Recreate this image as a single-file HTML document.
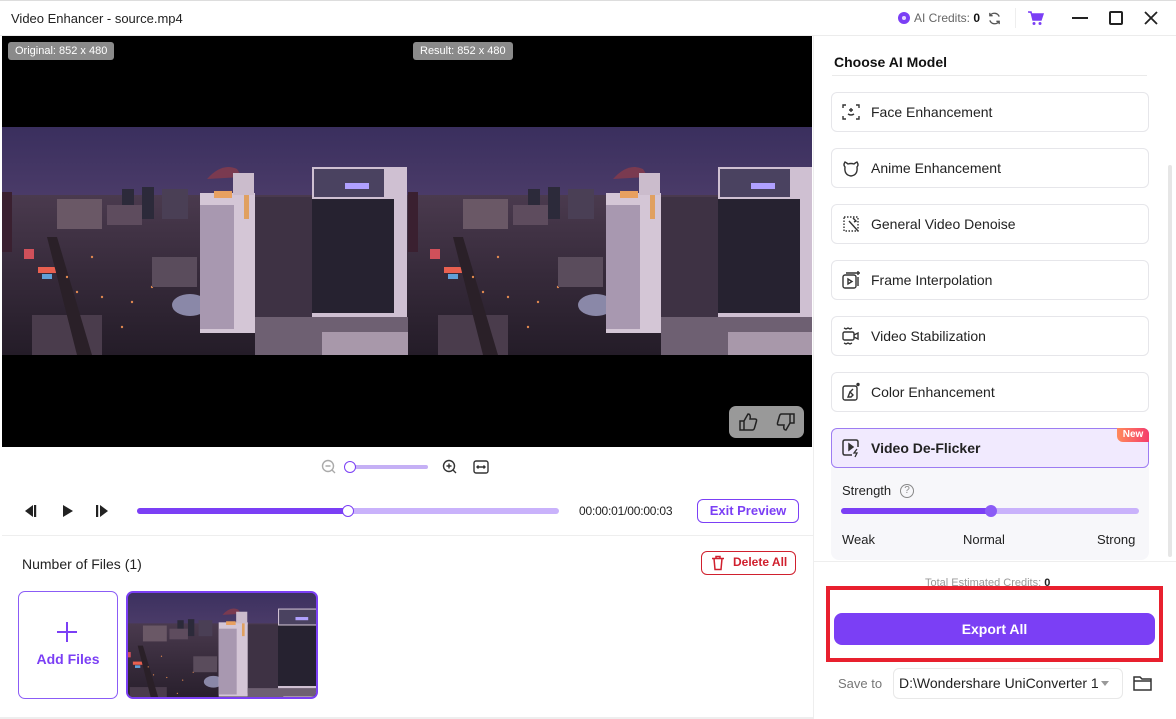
<!DOCTYPE html>
<html><head><meta charset="utf-8"><style>
*{box-sizing:border-box;margin:0;padding:0}
body{width:1176px;height:719px;overflow:hidden;background:#fff;font-family:"Liberation Sans",sans-serif;color:#222;position:relative}
.a{position:absolute}
.card{position:absolute;left:831px;width:318px;height:40px;border:1px solid #e6e6ea;border-radius:6px;background:#fff;font-size:14px;color:#222;display:flex;align-items:center;padding-left:9px}
.card svg{width:20px;height:20px;margin-right:10px}
</style></head><body>
<div class="a" style="left:0;top:0;width:1176px;height:36px;border-bottom:1px solid #ececec;border-top:1px solid #ddd"></div>
<div class="a" style="left:11px;top:11px;font-size:13px;color:#222">Video Enhancer - source.mp4</div>
<div class="a" style="left:898px;top:12px;width:12px;height:12px;border-radius:50%;background:#7b3ff5"></div>
<div class="a" style="left:902px;top:16px;width:4px;height:4px;border-radius:50%;background:#e6d8ff"></div>
<div class="a" style="left:914px;top:11px;font-size:12px;color:#666">AI Credits: <b style="color:#111">0</b></div>
<svg class="a" style="left:987px;top:11px" width="15" height="15" viewBox="0 0 16 16" fill="none" stroke="#555" stroke-width="1.4"><path d="M13 6A5.5 5.5 0 0 0 3.5 4.5M3 10a5.5 5.5 0 0 0 9.5 1.5"/><path d="M3 2v3h3M13 14v-3h-3"/></svg>
<div class="a" style="left:1015px;top:8px;width:1px;height:20px;background:#eee"></div>
<svg class="a" style="left:1027px;top:10px" width="17" height="16" viewBox="0 0 17 16"><path d="M1 2h3l2 8h8l2-6H5" fill="#7b3ff5" stroke="#7b3ff5" stroke-width="1.5"/><circle cx="7" cy="13.5" r="1.5" fill="#7b3ff5"/><circle cx="13" cy="13.5" r="1.5" fill="#7b3ff5"/></svg>
<div class="a" style="left:1072px;top:17px;width:16px;height:2px;background:#222"></div>
<div class="a" style="left:1109px;top:11px;width:14px;height:14px;border:2px solid #222;border-radius:2px"></div>
<svg class="a" style="left:1144px;top:11px" width="14" height="14"><path d="M1 1l12 12M13 1L1 13" stroke="#222" stroke-width="1.8"/></svg>

<div class="a" style="left:2px;top:36px;width:810px;height:411px;background:#000"></div>
<svg class="a" style="left:2px;top:127px" width="810" height="228" viewBox="0 0 810 228">
<defs>
<linearGradient id="sky" x1="0" y1="0" x2="0" y2="1"><stop offset="0" stop-color="#3a2f5e"/><stop offset=".5" stop-color="#55436f"/><stop offset="1" stop-color="#6e587e"/></linearGradient>
<linearGradient id="gr" x1="0" y1="0" x2="0" y2="1"><stop offset="0" stop-color="#4a3a4e"/><stop offset=".5" stop-color="#362a3a"/><stop offset="1" stop-color="#241c28"/></linearGradient>
<g id="sc">
<rect width="406" height="228" fill="url(#sky)"/>
<rect y="68" width="406" height="160" fill="url(#gr)"/>
<rect x="55" y="72" width="45" height="30" fill="#6a5866"/>
<rect x="120" y="62" width="12" height="28" fill="#2c2a3a"/>
<rect x="140" y="60" width="12" height="32" fill="#2c2a3a"/>
<rect x="160" y="62" width="26" height="30" fill="#4a3f55"/>
<rect x="105" y="78" width="35" height="20" fill="#5e4c5e"/>
<rect x="0" y="65" width="10" height="60" fill="#3a2030"/>
<rect x="22" y="122" width="10" height="10" fill="#d0505a"/>
<rect x="36" y="140" width="18" height="6" fill="#e86050"/>
<rect x="40" y="147" width="10" height="5" fill="#60a0d8"/>
<rect x="30" y="188" width="70" height="40" fill="#4a3c4c"/>
<path d="M55 110L90 228H75L45 110Z" fill="#2a2028"/>
<g fill="#e08850"><circle cx="65" cy="150" r="1.2"/><circle cx="75" cy="165" r="1.2"/><circle cx="100" cy="170" r="1.2"/><circle cx="130" cy="175" r="1.2"/><circle cx="120" cy="200" r="1.2"/><circle cx="150" cy="160" r="1.2"/><circle cx="90" cy="130" r="1.2"/></g>
<rect x="150" y="130" width="45" height="30" fill="#5a4c5c"/>
<ellipse cx="188" cy="178" rx="18" ry="11" fill="#8a88a8"/>
<path d="M205 52Q220 35 235 42L240 50Z" fill="#7a3a50"/>
<rect x="198" y="66" width="55" height="140" fill="#d4c6d6"/>
<rect x="198" y="78" width="34" height="124" fill="#a898b0"/>
<rect x="212" y="64" width="18" height="7" fill="#e8a060"/>
<rect x="242" y="62" width="5" height="30" fill="#e0a060"/>
<rect x="231" y="46" width="21" height="22" fill="#cbbccc"/>
<rect x="253" y="70" width="57" height="130" fill="#3e3244"/>
<rect x="310" y="40" width="95" height="160" fill="#cfc0d2"/>
<rect x="310" y="72" width="82" height="114" fill="#262230"/>
<rect x="312" y="42" width="70" height="28" fill="#4a4260"/>
<rect x="343" y="56" width="24" height="6" fill="#b0a0ff"/>
<rect x="253" y="190" width="153" height="38" fill="#6e6072"/>
<rect x="320" y="205" width="86" height="23" fill="#a898aa"/>
</g></defs>
<use href="#sc"/><use href="#sc" x="406"/>
</svg>
<div class="a" style="left:8px;top:42px;background:#8a8a8a;color:#fff;font-size:11px;padding:3px 7px;border-radius:3px">Original: 852 x 480</div>
<div class="a" style="left:413px;top:42px;background:#8a8a8a;color:#fff;font-size:11px;padding:3px 7px;border-radius:3px">Result: 852 x 480</div>
<div class="a" style="left:729px;top:406px;width:75px;height:32px;background:#999;border-radius:7px"></div>
<svg class="a" style="left:738px;top:412px" width="58" height="20" viewBox="0 0 58 20" fill="none" stroke="#222" stroke-width="1.5"><path d="M2 9h4v9H2zM6 9l4-7q3 0 2 5h5q2 0 1.5 2l-2 7q-.5 2-2 2H6"/><path d="M56 11h-4V2h4zM52 11l-4 7q-3 0-2-5h-5q-2 0-1.5-2l2-7q.5-2 2-2H52"/></svg>

<svg class="a" style="left:321px;top:459px" width="16" height="16" fill="none" stroke="#aaa" stroke-width="1.4"><circle cx="7" cy="7" r="5.5"/><path d="M4.5 7h5M11 11l3 3"/></svg>
<div class="a" style="left:350px;top:465px;width:78px;height:4px;background:#c5b0f5;border-radius:2px"></div>
<div class="a" style="left:344px;top:461px;width:12px;height:12px;border:1.5px solid #7b3ff5;border-radius:50%;background:#fff"></div>
<svg class="a" style="left:442px;top:459px" width="16" height="16" fill="none" stroke="#333" stroke-width="1.4"><circle cx="7" cy="7" r="5.5"/><path d="M4.5 7h5M7 4.5v5M11 11l3 3"/></svg>
<svg class="a" style="left:473px;top:459px" width="16" height="16" fill="none" stroke="#333" stroke-width="1.4"><rect x="1" y="2" width="14" height="12" rx="2"/><path d="M4 8h8M5.5 6.5L4 8l1.5 1.5M10.5 6.5L12 8l-1.5 1.5"/></svg>

<svg class="a" style="left:22px;top:503px" width="92" height="16" viewBox="0 0 92 16" fill="#222"><path d="M3 8l8-6v12z"/><rect x="12" y="2" width="2.2" height="12"/><path d="M41 2l10 6-10 6z"/><rect x="74" y="2" width="2.2" height="12"/><path d="M78 2l8 6-8 6z"/></svg>
<div class="a" style="left:137px;top:508px;width:422px;height:6px;background:#c9b2fb;border-radius:3px"></div>
<div class="a" style="left:137px;top:508px;width:212px;height:6px;background:#7b3ff5;border-radius:3px"></div>
<div class="a" style="left:342px;top:505px;width:12px;height:12px;border:1.5px solid #7b3ff5;border-radius:50%;background:#fff"></div>
<div class="a" style="left:579px;top:504px;font-size:12px;color:#222;letter-spacing:-0.2px">00:00:01/00:00:03</div>
<div class="a" style="left:697px;top:499px;width:102px;height:24px;border:1.5px solid #7b3ff5;border-radius:6px;color:#7b3ff5;font-size:13px;font-weight:bold;text-align:center;line-height:21px">Exit Preview</div>
<div class="a" style="left:2px;top:535px;width:811px;height:1px;background:#eee"></div>

<div class="a" style="left:22px;top:556px;font-size:14px;color:#222">Number of Files (1)</div>
<div class="a" style="left:701px;top:551px;width:95px;height:24px;border:1.5px solid #d0202e;border-radius:6px;color:#d0202e;font-size:12px;font-weight:bold;line-height:21px;padding-left:31px">Delete All</div>
<svg class="a" style="left:711px;top:555px" width="14" height="16" fill="none" stroke="#d0202e" stroke-width="1.5"><path d="M1 3.5h12M5 3.5V1.5h4v2M3 3.5l1 11h6l1-11"/></svg>
<div class="a" style="left:18px;top:591px;width:100px;height:108px;border:1.5px solid #8b5cf6;border-radius:7px"></div>
<div class="a" style="left:57px;top:631px;width:20px;height:2px;background:#7b3ff5"></div>
<div class="a" style="left:66px;top:622px;width:2px;height:20px;background:#7b3ff5"></div>
<div class="a" style="left:18px;top:651px;width:100px;text-align:center;font-size:14px;font-weight:bold;color:#7b3ff5">Add Files</div>
<div class="a" style="left:126px;top:591px;width:192px;height:108px;border:2px solid #7b3ff5;border-radius:7px;overflow:hidden;background:#4a3a55">
<svg width="192" height="108" viewBox="0 0 406 228" preserveAspectRatio="none" style="display:block"><use href="#sc" transform="translate(-30,-12) scale(1.12)"/></svg>
</div>
<div class="a" style="left:0;top:717px;width:813px;height:2px;background:#eee"></div>

<div class="a" style="left:813px;top:36px;width:1px;height:683px;background:#eee"></div>
<div class="a" style="left:834px;top:54px;font-size:14px;font-weight:bold;color:#111">Choose AI Model</div>
<div class="a" style="left:832px;top:75px;width:315px;height:1px;background:#eaeaea"></div>
<div class="card" style="top:92px"><svg viewBox="0 0 20 20" fill="none" stroke="#333" stroke-width="1.4"><path d="M2 6V3h3M15 3h3v3M18 14v3h-3M5 17H2v-3M7 12q3 2 6 0M10 6v4M8 8h4"/></svg>Face Enhancement</div>
<div class="card" style="top:148px"><svg viewBox="0 0 20 20" fill="none" stroke="#333" stroke-width="1.4"><path d="M4 4q-2 3 0 5q-1 8 6 9q7-1 6-9q2-2 0-5q-2 1-3 2q-3-1-6 0q-1-1-3-2z"/></svg>Anime Enhancement</div>
<div class="card" style="top:204px"><svg viewBox="0 0 20 20" fill="none" stroke="#333" stroke-width="1.4"><path d="M3 3h14v14H3z" stroke-dasharray="1.5 1.5"/><path d="M8 7l9 10M12 4l3 3-2 1"/></svg>General Video Denoise</div>
<div class="card" style="top:260px"><svg viewBox="0 0 20 20" fill="none" stroke="#333" stroke-width="1.4"><rect x="2" y="5" width="13" height="13" rx="2"/><path d="M7 9v5l4-2.5zM5 3h10M17 7v9M17 1v4M15 3h4"/></svg>Frame Interpolation</div>
<div class="card" style="top:316px"><svg viewBox="0 0 20 20" fill="none" stroke="#333" stroke-width="1.4"><rect x="2" y="6" width="11" height="8" rx="1.5"/><path d="M13 9l4-2v6l-4-2M3 2l2 1 2-1 2 1 2-1M3 17l2 1 2-1 2 1 2-1"/></svg>Video Stabilization</div>
<div class="card" style="top:372px"><svg viewBox="0 0 20 20" fill="none" stroke="#333" stroke-width="1.4"><rect x="2" y="4" width="14" height="14" rx="2"/><path d="M7 15l2-5 3 3-2 2zM9 10l3-3"/><circle cx="17" cy="2.5" r="1" fill="#333"/></svg>Color Enhancement</div>
<div class="a" style="left:831px;top:467px;width:318px;height:93px;background:#f7f7fa;border-radius:0 0 8px 8px"></div>
<div class="card" style="top:428px;background:#f1eafe;border-color:#9d7cf2;font-weight:bold;font-size:14px"><svg viewBox="0 0 20 20" fill="none" stroke="#333" stroke-width="1.5"><path d="M17 9V4q0-2-2-2H4Q2 2 2 4v11q0 2 2 2h7"/><path d="M8 6v6l4-3z" fill="#333"/><path d="M16 11l-3 4h3l-2 4" stroke-width="1.3"/></svg>Video De-Flicker</div>
<div class="a" style="left:1117px;top:428px;width:32px;height:14px;background:linear-gradient(90deg,#ff8a5c,#f53d6b);color:#fff;font-size:10px;font-weight:bold;text-align:center;line-height:14px;border-radius:0 6px 0 6px">New</div>
<div class="a" style="left:842px;top:483px;font-size:13px;color:#222">Strength</div>
<div class="a" style="left:900px;top:484px;width:14px;height:14px;border:1px solid #888;border-radius:50%;font-size:10px;color:#888;text-align:center;line-height:12px">?</div>
<div class="a" style="left:841px;top:508px;width:298px;height:6px;background:#c9b2fb;border-radius:3px"></div>
<div class="a" style="left:841px;top:508px;width:150px;height:6px;background:#7b3ff5;border-radius:3px"></div>
<div class="a" style="left:985px;top:505px;width:12px;height:12px;background:#8b5cf6;border-radius:50%"></div>
<div class="a" style="left:842px;top:532px;font-size:13px;color:#222">Weak</div>
<div class="a" style="left:963px;top:532px;font-size:13px;color:#222">Normal</div>
<div class="a" style="left:1097px;top:532px;font-size:13px;color:#222">Strong</div>
<div class="a" style="left:1168px;top:165px;width:4px;height:392px;background:#e6e6e6;border-radius:2px"></div>
<div class="a" style="left:814px;top:561px;width:362px;height:1px;background:#eee"></div>
<div class="a" style="left:925px;top:577px;font-size:11px;color:#999">Total Estimated Credits: <b style="color:#222">0</b></div>
<div class="a" style="left:826px;top:586px;width:337px;height:76px;border:4px solid #e8202e;background:#fff"></div>
<div class="a" style="left:834px;top:613px;width:321px;height:32px;background:#7b3ff5;border-radius:8px;color:#fff;font-size:14px;font-weight:bold;text-align:center;line-height:32px">Export All</div>
<div class="a" style="left:838px;top:676px;font-size:13px;color:#777">Save to</div>
<div class="a" style="left:893px;top:668px;width:230px;height:31px;border:1px solid #e8e8e8;border-radius:6px;font-size:14px;color:#222;line-height:29px;padding-left:5px;white-space:nowrap;overflow:hidden">D:\Wondershare UniConverter 1</div>
<div class="a" style="left:1101px;top:681px;border:4px solid transparent;border-top:5px solid #999"></div>
<svg class="a" style="left:1133px;top:675px" width="20" height="17" fill="none" stroke="#333" stroke-width="1.5"><path d="M1 2h6l2 2h9v11H1zM1 6h17"/></svg>
</body></html>
